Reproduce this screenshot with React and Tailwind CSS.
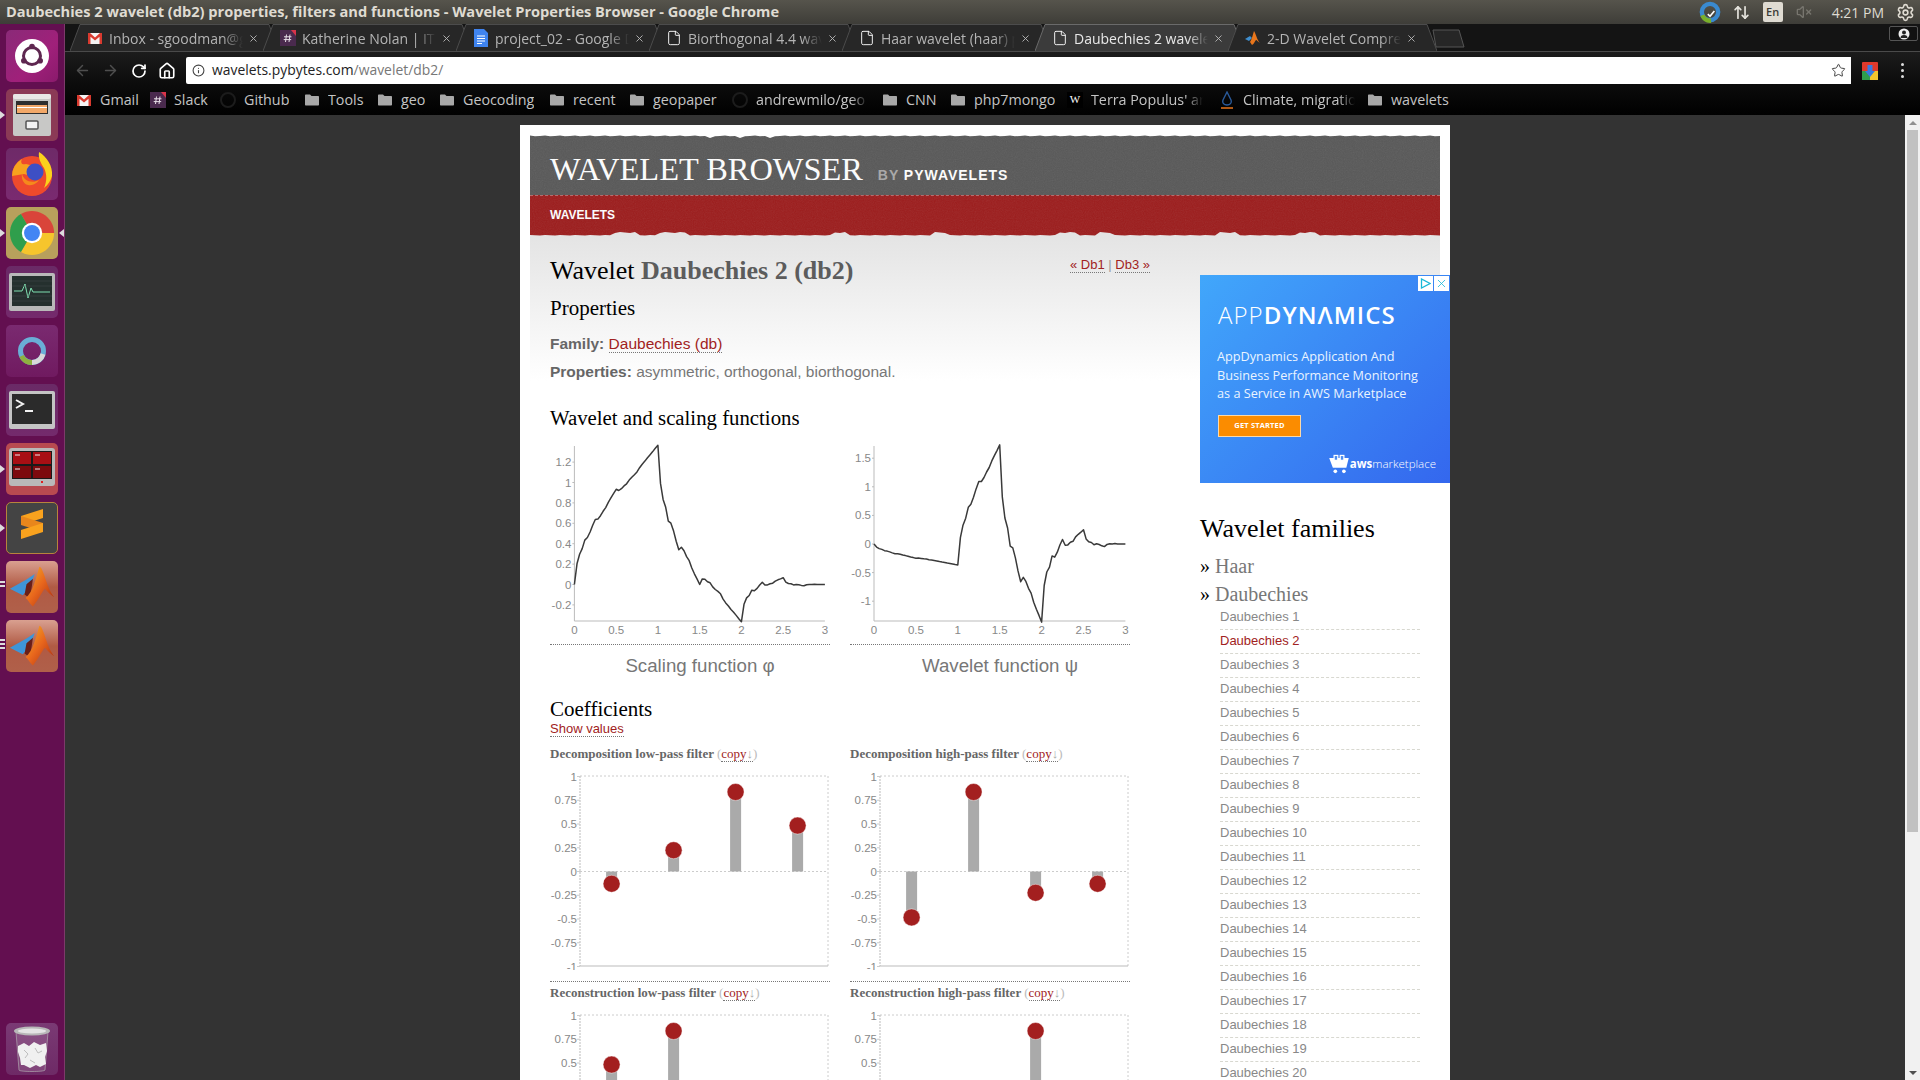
import { ArrowLeft, ArrowRight, RotateCw, Home, Info, Star, X, File, ArrowUpDown, VolumeX, Settings } from "lucide-react";

const SERIF = "font-['Liberation_Serif',serif]";
const SANS = "font-['Liberation_Sans',sans-serif]";
const UI = "font-['Open_Sans',sans-serif]";

// db2 scaling + wavelet functions, worked out from the filter by the cascade
const H = [0.6830127, 1.1830127, 0.3169873, -0.1830127];
const G = [-0.1830127, -0.3169873, 1.1830127, -0.6830127];
const N = 32;
const phi = new Array(3 * N + 1).fill(0);
phi[N] = 1.3660254;
phi[2 * N] = -0.3660254;
const at = (i) => (i < 0 || i > 3 * N ? 0 : phi[i]);
for (let s = N / 2; s >= 1; s /= 2) {
  for (let i = s; i < 3 * N; i += 2 * s) {
    phi[i] = H.reduce((acc, h, k) => acc + h * at(2 * i - k * N), 0);
  }
}
const psi = phi.map((_, i) => G.reduce((acc, g, k) => acc + g * at(2 * i - k * N), 0));

const TABS = [
  { title: "Inbox - sgoodman@gmail.com", icon: "gmail" },
  { title: "Katherine Nolan | IT Services", icon: "slack" },
  { title: "project_02 - Google Docs", icon: "docs" },
  { title: "Biorthogonal 4.4 wavelet", icon: "file" },
  { title: "Haar wavelet (haar) properties", icon: "file" },
  { title: "Daubechies 2 wavelet (db2)", icon: "file", active: true },
  { title: "2-D Wavelet Compression", icon: "matlab" },
];

const BOOKMARKS = [
  { label: "Gmail", icon: "gmail", w: "w-[74px]" },
  { label: "Slack", icon: "slack", w: "w-[70px]" },
  { label: "Github", icon: "github", w: "w-[84px]" },
  { label: "Tools", icon: "folder", w: "w-[73px]" },
  { label: "geo", icon: "folder", w: "w-[62px]" },
  { label: "Geocoding", icon: "folder", w: "w-[110px]" },
  { label: "recent", icon: "folder", w: "w-[80px]" },
  { label: "geopaper", icon: "folder", w: "w-[103px]" },
  { label: "andrewmilo/geo", icon: "github", w: "w-[150px]", fade: true },
  { label: "CNN", icon: "folder", w: "w-[68px]" },
  { label: "php7mongo", icon: "folder", w: "w-[117px]" },
  { label: "Terra Populus' area", icon: "wiki", w: "w-[152px]", fade: true },
  { label: "Climate, migration", icon: "climate", w: "w-[148px]", fade: true },
  { label: "wavelets", icon: "folder", w: "w-[100px]" },
];

const Favicon = ({ kind }) => {
  if (kind === "gmail")
    return (
      <svg width="16" height="16" viewBox="0 0 16 16">
        <rect x="1" y="3" width="14" height="11" fill="#f4f4f4" />
        <path d="M1 3h2l5 4.5L13 3h2v11h-2.500V6.800L8 10.500 3.500 6.800V14H1z" fill="#d93a2f" />
      </svg>
    );
  if (kind === "slack")
    return (
      <svg width="16" height="16" viewBox="0 0 16 16">
        <rect width="16" height="16" fill="#4a2a4e" />
        <path d="M11 0h5v6z" fill="#d8344a" />
        <path d="M6.500 4.500 5.500 12M10 4.500 9 12M4 6.800h7.500M3.700 9.600h7.500" stroke="#e8e0e8" strokeWidth="1" />
      </svg>
    );
  if (kind === "docs")
    return (
      <svg width="16" height="18" viewBox="0 0 16 18">
        <path d="M1 0h10l4 4v14H1z" fill="#3f84f0" />
        <path d="M4 7h8M4 9.500h8M4 12h8M4 14.500h5" stroke="#fff" strokeWidth="1" />
      </svg>
    );
  if (kind === "file") return <File size={16} strokeWidth={1.4} className="text-white" />;
  if (kind === "matlab")
    return (
      <svg width="16" height="16" viewBox="0 0 16 16">
        <path d="M0 9l5-3 2 2-3 3z" fill="#3f8fd0" />
        <path d="M9 1c2 3 3 9 6 12-2-1-3-3-4-3-1 1-2 4-4 5L5 12C7 9 8 4 9 1z" fill="#e8761c" />
      </svg>
    );
  if (kind === "github")
    return (
      <svg width="16" height="16" viewBox="0 0 16 16">
        <circle cx="8" cy="8" r="7" fill="none" stroke="#1c1c1c" strokeWidth="2" />
      </svg>
    );
  if (kind === "folder")
    return (
      <svg width="14" height="14" viewBox="0 0 14 14">
        <path d="M0 2.500c0-.6.400-1 1-1h4l1.500 1.500H13c.6 0 1 .400 1 1v7.500c0 .6-.400 1-1 1H1c-.6 0-1-.400-1-1z" fill="#a8a8a8" />
      </svg>
    );
  if (kind === "wiki")
    return (
      <span className={`flex h-[16px] w-[16px] items-center justify-center bg-black text-[11px] text-white ${SERIF}`}>W</span>
    );
  return (
    <svg width="14" height="18" viewBox="0 0 14 18">
      <path d="M7 1 3 9c-1 3 1 5 4 5s5-2 4-5z" fill="none" stroke="#2a5a9a" strokeWidth="1.400" />
      <path d="M1 17h12" stroke="#e8761c" strokeWidth="1.500" />
    </svg>
  );
};

const Tab = ({ tab }) => (
  <div className="relative h-[28px] w-[193px] shrink-0">
    <svg width="209" height="28" viewBox="0 0 209 28" className="absolute left-0 top-0">
      <path d="M0 28 10 1.500h189L209 28" fill={tab.active ? "#3b3b3b" : "#272727"} stroke={tab.active ? "#6a6a6a" : "#4c4c4c"} />
    </svg>
    <div className="relative flex h-full items-center pl-[17px] pt-[2px]">
      <span className="flex w-[16px] justify-center"><Favicon kind={tab.icon} /></span>
      <span className={`ml-[6px] w-[134px] overflow-hidden whitespace-nowrap text-[14px] [mask-image:linear-gradient(90deg,#000_85%,transparent)] ${UI} ${tab.active ? "text-[#e8e8e8]" : "text-[#b4b4b4]"}`}>
        {tab.title}
      </span>
      <X size={11} strokeWidth={2} className="ml-[5px] text-[#b8b8b8]" />
    </div>
  </div>
);

const Tile = ({ bg, children }) => (
  <div className={`relative flex h-[52px] w-[52px] items-center justify-center overflow-hidden rounded-[5px] ${bg}`}>{children}</div>
);

const Matlab = () => (
  <svg width="48" height="48" viewBox="0 0 52 52">
    <defs>
      <linearGradient id="mw" x1="0" x2="1" y1="0" y2="1">
        <stop offset="0" stopColor="#f2b52a" />
        <stop offset=".5" stopColor="#e8661c" />
        <stop offset="1" stopColor="#a62a10" />
      </linearGradient>
    </defs>
    <path d="M2 28 20 18l9-6-5 14-8 9z" fill="#3f95d8" />
    <path d="M20 23l7-6-2 14 2 10-9-7z" fill="#6a1f18" />
    <path d="M34 4c3 0 6 12 9 20 2 6 5 10 7 13-4-2-7-6-10-9-4 4-8 14-13 19-3-2-5-7-8-9 8-6 12-24 15-34z" fill="url(#mw)" />
  </svg>
);

const Launcher = () => (
  <div className="relative flex w-[65px] shrink-0 flex-col border-r border-r-[#7d3a6a] bg-[#630f50] pb-[5px] pl-[6px] pt-[6px]">
    <div className="flex flex-col gap-[7px]">
      <Tile bg="bg-[linear-gradient(135deg,#8a2a78,#a0207a_60%,#8a1a6c)]">
        <svg width="34" height="34" viewBox="0 0 34 34">
          <circle cx="17" cy="17" r="17" fill="#fff" />
          <circle cx="17" cy="17" r="8.500" fill="none" stroke="#5e2750" strokeWidth="3" />
          <circle cx="17" cy="7.500" r="2.800" fill="#5e2750" />
          <circle cx="8.800" cy="21.700" r="2.800" fill="#5e2750" />
          <circle cx="25.200" cy="21.700" r="2.800" fill="#5e2750" />
        </svg>
      </Tile>
      <div className="relative">
        <Tile bg="bg-[#8b3a56]">
          <svg width="40" height="44" viewBox="0 0 40 44">
            <rect x="1" y="1" width="38" height="42" rx="2" fill="#c8c8c6" />
            <rect x="1" y="1" width="38" height="5" rx="2" fill="#e8e8e6" />
            <rect x="4" y="8" width="32" height="13" fill="#2e2e2e" />
            <rect x="5" y="12" width="30" height="8" fill="#f2a868" />
            <rect x="5" y="14" width="30" height="1" fill="#fff" />
            <rect x="14" y="28" width="12" height="8" rx="1" fill="#f2f2f2" stroke="#555" strokeWidth="1.500" />
          </svg>
        </Tile>
        <span className="absolute left-[-6px] top-[22px] h-0 w-0 border-y-[4px] border-l-[5px] border-y-transparent border-l-[#ddd]" />
      </div>
      <Tile bg="bg-[linear-gradient(#6e2a68,#7a2a70)]">
        <svg width="46" height="46" viewBox="0 0 46 46">
          <circle cx="23" cy="25" r="20" fill="#ee4a2c" />
          <path d="M3 25a20 20 0 0 1 10-17c-2 4 0 6 4 5l8 2 3 6-6 4-7-2z" fill="#f7a21e" />
          <circle cx="26" cy="21" r="8.500" fill="#3d4fc4" />
          <path d="M13 22c1 8 10 11 17 7-2 3-6 6-11 5-5-1-7-7-6-12z" fill="#f58a1c" />
          <path d="M30 1c8 5 14 14 13 24-1 4-4 9-8 12 3-7 3-14 0-20-3-5-6-9-5-16z" fill="#fbd11c" />
        </svg>
      </Tile>
      <div className="relative">
        <Tile bg="bg-[#b8a05c]">
          <svg width="46" height="46" viewBox="0 0 52 52">
            <path d="M26 26 13.500 4.400A25 25 0 0 1 51 26z" fill="#d9443a" />
            <path d="M26 26h25A25 25 0 0 1 13.500 47.600z" fill="#f6c52c" />
            <path d="M26 26 13.500 47.600A25 25 0 0 1 13.500 4.400z" fill="#2f9e4c" />
            <circle cx="26" cy="26" r="11.500" fill="#fff" />
            <circle cx="26" cy="26" r="9" fill="#4285f4" />
          </svg>
        </Tile>
        <span className="absolute left-[-6px] top-[22px] h-0 w-0 border-y-[4px] border-l-[5px] border-y-transparent border-l-[#ddd]" />
        <span className="absolute left-[53px] top-[22px] h-0 w-0 border-y-[4px] border-r-[5px] border-y-transparent border-r-[#ddd]" />
      </div>
      <Tile bg="bg-[linear-gradient(#6a2a66,#742a6c)]">
        <svg width="46" height="38" viewBox="0 0 46 38">
          <rect x="0" y="0" width="46" height="38" rx="2" fill="#b9b9b9" />
          <rect x="3" y="3" width="40" height="30" fill="#25302e" />
          <path d="M5 18h8l3-7 3 14 3-10 2 4h17" fill="none" stroke="#7fe0b0" strokeWidth="1" />
          <path d="M3 8h40M3 13h40M3 23h40M3 28h40" stroke="#3c4846" strokeWidth=".6" />
        </svg>
      </Tile>
      <Tile bg="bg-[linear-gradient(#7a2a70,#701a60)]">
        <svg width="30" height="30" viewBox="0 0 30 30">
          <circle cx="15" cy="15" r="11.500" fill="none" stroke="#6aaed6" strokeWidth="5" />
          <path d="M4.500 20A11.500 11.500 0 0 0 15 26.500" fill="none" stroke="#8fb040" strokeWidth="5" />
          <path d="M15 26.500A11.500 11.500 0 0 0 26 18" fill="none" stroke="#d8d8d8" strokeWidth="5" />
        </svg>
      </Tile>
      <Tile bg="bg-[linear-gradient(#6a2a66,#742a6c)]">
        <svg width="46" height="38" viewBox="0 0 46 38">
          <rect width="46" height="38" rx="2" fill="#c4c4c4" />
          <rect x="3" y="3" width="40" height="30" fill="#2b2b2b" />
          <path d="M7 9l7 4-7 4" fill="none" stroke="#f2f2f2" strokeWidth="2" />
          <path d="M16 20h8" stroke="#f2f2f2" strokeWidth="2" />
        </svg>
      </Tile>
      <div className="relative">
        <Tile bg="bg-[#b84a50]">
          <svg width="46" height="42" viewBox="0 0 46 42">
            <rect width="46" height="38" rx="3" fill="#b9b9b9" />
            <rect x="3" y="3" width="40" height="28" fill="#1a1a1a" />
            <rect x="4" y="4" width="18" height="12" fill="#a80f14" />
            <rect x="24" y="4" width="18" height="12" fill="#a80f14" />
            <rect x="4" y="18" width="18" height="12" fill="#7c0a0e" />
            <rect x="24" y="18" width="18" height="12" fill="#7c0a0e" />
            <path d="M6 7h5M26 7h5M6 21h5M26 21h5" stroke="#eee" strokeWidth="1" />
            <rect x="32" y="33" width="2" height="2" fill="#e02020" />
          </svg>
        </Tile>
        <span className="absolute left-[-6px] top-[22px] h-0 w-0 border-y-[4px] border-l-[5px] border-y-transparent border-l-[#ddd]" />
      </div>
      <div className="relative">
        <Tile bg="bg-[#444] border border-[#b8843c]">
          <svg width="30" height="40" viewBox="0 0 30 40">
            <path d="M26 1v9L4 17V8z" fill="#f9a21e" />
            <path d="M4 8l22 7v9L4 17z" fill="#e8861c" />
            <path d="M26 15v9L4 31v-9z" fill="#f9a21e" />
          </svg>
        </Tile>
        <span className="absolute left-[-6px] top-[22px] h-0 w-0 border-y-[4px] border-l-[5px] border-y-transparent border-l-[#ddd]" />
      </div>
      <div className="relative">
        <Tile bg="bg-[linear-gradient(#d9a090,#b05a44_50%,#b0604a)]"><Matlab /></Tile>
        <span className="absolute left-[-6px] top-[20px] h-[2px] w-[5px] bg-[#ddd]" />
        <span className="absolute left-[-6px] top-[24px] h-[2px] w-[5px] bg-[#ddd]" />
      </div>
      <div className="relative">
        <Tile bg="bg-[linear-gradient(#d9a090,#b05a44_50%,#b0604a)]"><Matlab /></Tile>
        <span className="absolute left-[-6px] top-[19px] h-[2px] w-[5px] bg-[#ddd]" />
        <span className="absolute left-[-6px] top-[23px] h-[2px] w-[5px] bg-[#ddd]" />
        <span className="absolute left-[-6px] top-[27px] h-[2px] w-[5px] bg-[#ddd]" />
      </div>
    </div>
    <div className="mt-auto">
      <Tile bg="bg-[linear-gradient(#7a3a74,#6e2a66)]">
        <svg width="40" height="50" viewBox="0 0 40 50">
          <path d="M4 8l3 38c0 2 26 2 26 0l3-38z" fill="#ffffff20" stroke="#b8b8b8" strokeWidth=".6" />
          <ellipse cx="20" cy="7" rx="18" ry="4.500" fill="#b8b8b8" />
          <ellipse cx="20" cy="7" rx="14" ry="2.500" fill="#e4e4e4" />
          <path d="M6 22l6-3 5 3 5-4 6 3 6-2 1 8-2 6 1 7-6 3-4-2-6 3-6-3-3 0-1-7-2-6z" fill="#f0f0f0" />
          <path d="M12 26l4 4-3 4M23 24l3 5 4-2M18 36l5 3" fill="none" stroke="#bdbdbd" strokeWidth="1" />
        </svg>
      </Tile>
    </div>
  </div>
);

const Tray = () => (
  <div className="flex h-full items-center">
    <svg width="22" height="24" viewBox="0 0 20 22" className="mr-[12px]">
      <circle cx="10" cy="11" r="7.500" fill="none" stroke="#3a8ad0" strokeWidth="4" />
      <path d="M3 14a8 8 0 0 0 8 5" fill="none" stroke="#7ab02a" strokeWidth="4" />
      <path d="M8 13l2 2 4-5" stroke="#fff" fill="none" strokeWidth="1.500" />
    </svg>
    <ArrowUpDown size={17} strokeWidth={2.4} className="mr-[13px] text-[#e4e2dc]" />
    <span className={`mr-[13px] flex h-[20px] w-[20px] items-center justify-center rounded-[2px] bg-[#dfdbd2] text-[11px] font-semibold text-[#3c3b37] ${UI}`}>En</span>
    <VolumeX size={16} className="mr-[20px] text-[#77756e]" />
    <span className={`mr-[12px] text-[14px] text-[#dfdbd2] ${UI}`}>4:21 PM</span>
    <Settings size={19} className="mr-[5px] text-[#dfdbd2]" />
  </div>
);

const TitleBar = () => (
  <div className="flex h-[24px] shrink-0 items-center justify-between bg-[linear-gradient(#56544c,#3e3d38)] pl-[6px]">
    <span className={`whitespace-nowrap text-[14.600px] font-bold text-[#dfdbd2] ${UI}`}>
      Daubechies 2 wavelet (db2) properties, filters and functions - Wavelet Properties Browser - Google Chrome
    </span>
    <Tray />
  </div>
);

const TabStrip = () => (
  <div className="flex h-[28px] shrink-0 items-end justify-between border-b border-b-[#4a4a4a] bg-[#141414] pl-[5px]">
    <div className="flex items-end">
      {TABS.map((t) => <Tab key={t.title} tab={t} />)}
      <svg width="34" height="20" viewBox="0 0 34 20" className="mb-[2px] ml-[11px]">
        <path d="M1 1h26l5 17H4z" fill="#262626" stroke="#555" />
      </svg>
    </div>
    <div className="mb-[10px] mr-[2px] flex h-[15px] w-[29px] items-center justify-center rounded-[2px] border border-[#555] bg-[#111]">
      <svg width="12" height="12" viewBox="0 0 12 12"><circle cx="6" cy="6" r="5.500" fill="#eee" /><circle cx="6" cy="4.500" r="2" fill="#222" /><path d="M2.500 10a3.500 3 0 0 1 7 0z" fill="#222" /></svg>
    </div>
  </div>
);

const Toolbar = () => (
  <div className="flex h-[32px] shrink-0 items-end bg-[linear-gradient(#1c1c1c,#0c0c0c)]">
    <div className="flex h-[27px] w-[121px] items-center pl-[9px] text-[#777]">
      <ArrowLeft size={17} strokeWidth={2} className="opacity-60" />
      <ArrowRight size={17} strokeWidth={2} className="ml-[11px] opacity-60" />
      <RotateCw size={16} strokeWidth={2.6} className="ml-[12px] text-white" />
      <Home size={18} strokeWidth={2.2} className="ml-[11px] text-white" />
    </div>
    <div className="flex h-[27px] w-[1665px] items-center rounded-l-[2px] bg-white pl-[6px] pr-[5px]">
      <Info size={13} className="text-[#444]" />
      <span className={`ml-[7px] text-[13.900px] ${UI} text-[#222]`}>
        wavelets.pybytes.com<span className="text-[#777]">/wavelet/db2/</span>
      </span>
      <Star size={15} strokeWidth={1.6} className="ml-auto text-[#444]" />
    </div>
    <div className="flex h-[27px] flex-1 items-center pl-[11px]">
      <svg width="16" height="18" viewBox="0 0 16 18">
        <rect width="16" height="18" rx="1" fill="#e0392c" />
        <rect y="9" width="8" height="9" fill="#2f9e4c" />
        <rect x="8" y="9" width="8" height="9" fill="#f6c52c" />
        <path d="M5.500 3h5v6H13l-5 6-5-6h2.500z" fill="#3a7ae0" />
      </svg>
      <span className="ml-[23px] flex flex-col gap-[3px]">
        <i className="block h-[3px] w-[3px] rounded-full bg-[#ddd]" />
        <i className="block h-[3px] w-[3px] rounded-full bg-[#ddd]" />
        <i className="block h-[3px] w-[3px] rounded-full bg-[#ddd]" />
      </span>
    </div>
  </div>
);

const BookmarkBar = () => (
  <div className="flex h-[31px] shrink-0 items-center bg-[linear-gradient(#0c0c0c,#000)] pl-[11px]">
    {BOOKMARKS.map((b) => (
      <div key={b.label} className={`flex items-center ${b.w}`}>
        <span className="flex w-[16px] shrink-0 justify-center"><Favicon kind={b.icon} /></span>
        <span className={`ml-[8px] overflow-hidden whitespace-nowrap text-[14.300px] text-[#c4c4c4] ${UI} ${b.fade ? "w-[112px] [mask-image:linear-gradient(90deg,#000_85%,transparent)]" : ""}`}>
          {b.label}
        </span>
      </div>
    ))}
  </div>
);

// torn paper edge, a rough line with a few bigger bites
const tornTop = (() => {
  let p = "M0 0";
  for (let x = 0; x <= 910; x += 5) {
    const big = x > 150 && x < 250 && x % 30 === 0 ? 2.5 : 0;
    p += `L${x} ${0.5 + ((x * 7) % 3) * 0.4 + big}`;
  }
  return p + "L910 0Z";
})();
const tornBottom = (() => {
  let p = "M0 8";
  for (let x = 0; x <= 910; x += 5) {
    const bump = [[85, 105], [130, 155], [305, 318], [405, 418], [530, 548], [570, 582], [690, 705], [770, 785]].some(([a, b]) => x >= a && x <= b);
    p += `L${x} ${bump ? 4 + (x % 15) / 10 : 7 + ((x * 5) % 3) * 0.3}`;
  }
  return p + "L910 8Z";
})();

const SiteHeader = () => (
  <div className="relative">
    <div className="flex h-[60px] items-end bg-[#585858] pb-[7px] pl-[20px]">
      <span className={`text-[32.400px] leading-[38px] text-white ${SERIF}`}>WAVELET BROWSER</span>
      <span className={`mb-[2px] ml-[15px] text-[14px] font-bold tracking-[0.07em] text-[#a8a8a8] ${SANS}`}>
        BY <span className="text-white">PYWAVELETS</span>
      </span>
    </div>
    <div className="flex h-[41px] items-center border-t border-dashed border-t-[#b56a6a] bg-[#9c1c1c] pb-[3px] pl-[20px]">
      <span className={`text-[12px] font-bold text-white ${SANS}`}>WAVELETS</span>
    </div>
    {/* paper grain + torn edges */}
    <svg width="910" height="101" className="pointer-events-none absolute left-0 top-0 opacity-[0.1]">
      <filter id="grain"><feTurbulence type="fractalNoise" baseFrequency="0.9" numOctaves="2" /><feColorMatrix type="saturate" values="0" /></filter>
      <rect width="910" height="101" filter="url(#grain)" />
    </svg>
    <svg width="910" height="8" className="absolute left-0 top-0"><path d={tornTop} fill="#fff" /></svg>
    <svg width="910" height="8" className="absolute bottom-0 left-0"><path d={tornBottom} fill="#e4e4e4" /></svg>
  </div>
);

const A = ({ children, className = "" }) => (
  <a className={`border-b border-dotted border-b-[#777] text-[#a12222] ${className}`}>{children}</a>
);

const FunctionPlot = ({ data, ox, sx, oy, sy, yTicks, caption }) => {
  const d = data.map((v, i) => `${i ? "L" : "M"}${(ox + (sx * i) / N).toFixed(1)} ${(oy - sy * v).toFixed(1)}`).join("");
  return (
    <div>
      <div className="border-b border-dotted border-b-[#777] pb-[5px]">
        <svg width="280" height="202" viewBox="0 0 280 202" className={`block ${SANS}`}>
          <path d={`M${ox} 9V184H${ox + sx * 3}`} fill="none" stroke="#bbb" />
          {yTicks.map((t) => (
            <g key={t}>
              <path d={`M${ox - 2} ${oy - sy * t}H${ox}`} stroke="#bbb" />
              <text x={ox - 3} y={oy - sy * t + 4} textAnchor="end" fontSize="11.500" fill="#888">{t}</text>
            </g>
          ))}
          {[0, 0.5, 1, 1.5, 2, 2.5, 3].map((t) => (
            <text key={t} x={ox + sx * t} y={197} textAnchor="middle" fontSize="11.500" fill="#888">{t}</text>
          ))}
          <path d={d} fill="none" stroke="#3a3a3a" strokeWidth="1.500" strokeLinejoin="round" />
        </svg>
      </div>
      <div className={`mt-[10px] pl-[20px] text-center text-[18.700px] leading-[22px] text-[#777] ${SANS}`}>{caption}</div>
    </div>
  );
};

const Y_TICKS = [1, 0.75, 0.5, 0.25, 0, -0.25, -0.5, -0.75, -1];
const CENTERS = [61.6, 123.6, 185.6, 247.6];

const StemPlot = ({ values }) => (
  <svg width="280" height="200" viewBox="0 0 280 200" className={`block ${SANS}`}>
    <path d="M30 6H278V196" fill="none" stroke="#ccc" strokeDasharray="2 2" />
    <path d="M30 6V196" fill="none" stroke="#bbb" strokeDasharray="2 1" />
    <path d="M30 196H278" stroke="#bbb" />
    <path d="M30 101.500H278" stroke="#ccc" strokeDasharray="2 2" />
    {Y_TICKS.map((t) => (
      <g key={t}>
        <path d={`M27 ${101.5 - 95 * t}H30`} stroke="#ccc" />
        <text x="27" y={101.5 - 95 * t + 4} textAnchor="end" fontSize="11.500" fill="#888">{t}</text>
      </g>
    ))}
    {values.map((v, i) => (
      <g key={i}>
        <rect x={CENTERS[i] - 5.5} y={Math.min(101.5, 101.5 - 95 * v)} width="11" height={Math.abs(95 * v)} fill="#aaa" />
        <circle cx={CENTERS[i]} cy={101.5 - 95 * v} r="8.500" fill="#a31f1f" stroke="#fff" strokeOpacity=".7" strokeWidth=".6" />
      </g>
    ))}
  </svg>
);

const FilterCell = ({ title, values, underline }) => (
  <div className={underline ? "border-b border-dotted border-b-[#777] pb-[11px]" : ""}>
    <div className={`h-[27px] whitespace-nowrap text-[13px] font-bold leading-[22px] text-[#666] ${SERIF}`}>
      {title}{" "}
      <span className="font-normal text-[#bbb]">
        (<A>copy<span className="text-[#aaa]">↓</span></A>)
      </span>
    </div>
    <StemPlot values={values} />
  </div>
);

const Main = () => (
  <div className="w-[650px] shrink-0 pr-[50px]">
    <div className="flex items-start justify-between pt-[20px]">
      <h1 className={`text-[26px] leading-[30px] text-black ${SERIF}`}>
        Wavelet <span className="font-bold text-[#5c5c5c]">Daubechies 2 (db2)</span>
      </h1>
      <div className={`pt-[1px] text-[13px] leading-[15px] text-[#999] ${SANS}`}>
        <A>« Db1</A> | <A>Db3 »</A>
      </div>
    </div>
    <h2 className={`mt-[10px] text-[21px] leading-[24px] text-black ${SERIF}`}>Properties</h2>
    <p className={`mt-[12px] text-[15.500px] leading-[24px] text-[#777] ${SANS}`}>
      <b className="text-[#666]">Family:</b> <A>Daubechies (db)</A>
    </p>
    <p className={`mt-[4px] text-[15.500px] leading-[24px] text-[#777] ${SANS}`}>
      <b className="text-[#666]">Properties:</b> asymmetric, orthogonal, biorthogonal.
    </p>
    <h2 className={`mt-[22px] text-[20.800px] leading-[24px] text-black ${SERIF}`}>Wavelet and scaling functions</h2>
    <div className="mt-[7px] grid w-[580px] grid-cols-2 gap-x-[20px]">
      <FunctionPlot data={phi} ox={24.4} sx={83.5} oy={147.5} sy={102} yTicks={[1.2, 1, 0.8, 0.6, 0.4, 0.2, 0, -0.2]} caption="Scaling function φ" />
      <FunctionPlot data={psi} ox={24} sx={83.8} oy={107} sy={57.2} yTicks={[1.5, 1, 0.5, 0, -0.5, -1]} caption="Wavelet function ψ" />
    </div>
    <h2 className={`mt-[20px] text-[21px] leading-[24px] text-black ${SERIF}`}>Coefficients</h2>
    <div className={`text-[13px] leading-[16px] ${SANS}`}><A>Show values</A></div>
    <div className="mt-[6px] grid w-[580px] grid-cols-2 gap-x-[20px]">
      <FilterCell underline title="Decomposition low-pass filter" values={[-0.129, 0.224, 0.837, 0.483]} />
      <FilterCell underline title="Decomposition high-pass filter" values={[-0.483, 0.837, -0.224, -0.129]} />
      <FilterCell title="Reconstruction low-pass filter" values={[0.483, 0.837, 0.224, -0.129]} />
      <FilterCell title="Reconstruction high-pass filter" values={[-0.129, -0.224, 0.837, -0.483]} />
    </div>
  </div>
);

const Ad = () => (
  <div className={`relative h-[208px] w-[250px] bg-[linear-gradient(135deg,#41a7fb,#3467ee)] pl-[17px] text-white ${UI}`}>
    <div className="absolute right-[1px] top-[1px] flex gap-[1px]">
      <span className="flex h-[15px] w-[15px] items-center justify-center bg-white">
        <svg width="11" height="11" viewBox="0 0 11 11"><path d="M1.500 1v9L10 5.500z" fill="none" stroke="#19b8d8" strokeWidth="1.300" /></svg>
      </span>
      <span className="flex h-[15px] w-[15px] items-center justify-center bg-white">
        <X size={13} strokeWidth={1.5} className="text-[#19b8d8]" />
      </span>
    </div>
    <div className="whitespace-nowrap pl-[1px] pt-[25px] text-[24px] leading-[30px] tracking-[0.045em]">
      <span className="font-light">APP</span><span className="font-semibold">DYNΛMICS</span>
    </div>
    <div className="mt-[17px] whitespace-nowrap text-[12.700px] leading-[18.500px] text-[#eaf4ff]">
      AppDynamics Application And<br />Business Performance Monitoring<br />as a Service in AWS Marketplace
    </div>
    <div className="ml-[1px] mt-[12px] flex h-[22px] w-[83px] items-center justify-center border border-[#fbd9a8] bg-[#fb8c00] text-[7.500px] font-bold tracking-[0.02em]">
      GET STARTED
    </div>
    <div className="mt-[17px] flex items-center justify-end pr-[14px]">
      <svg width="22" height="20" viewBox="0 0 18 16">
        <path d="M1 3h16l-2 8H4z" fill="#fff" />
        <rect x="5" y="1" width="3" height="4" fill="#4b8df0" stroke="#fff" />
        <rect x="10" y="1" width="3" height="4" fill="#4b8df0" stroke="#fff" />
        <circle cx="6" cy="14" r="1.500" fill="#fff" /><circle cx="13" cy="14" r="1.500" fill="#fff" />
      </svg>
      <span className="text-[11.500px] font-bold leading-[14px]">aws</span>
      <span className="text-[11.500px] font-light leading-[14px]">marketplace</span>
    </div>
  </div>
);

const Sidebar = () => (
  <div className="mr-[-10px] w-[250px] shrink-0 pt-[39px]">
    <Ad />
    <h2 className={`mt-[30px] text-[26px] leading-[32px] text-black ${SERIF}`}>Wavelet families</h2>
    <div className={`mt-[7px] text-[20px] leading-[28px] text-black ${SERIF}`}>» <span className="text-[#777]">Haar</span></div>
    <div className={`text-[20px] leading-[28px] text-black ${SERIF}`}>» <span className="text-[#777]">Daubechies</span></div>
    <ul className={`ml-[20px] mt-[-2px] w-[200px] text-[13px] ${SANS}`}>
      {Array.from({ length: 20 }, (_, i) => i + 1).map((n) => (
        <li key={n} className={`h-[24px] border-b border-dashed border-b-[#d8d8d0] leading-[21px] ${n === 2 ? "text-[#a12222]" : "text-[#888]"}`}>
          Daubechies {n}
        </li>
      ))}
    </ul>
  </div>
);

const Scrollbar = () => (
  <div className="flex w-[15px] shrink-0 flex-col items-center bg-[#f1f1f1]">
    <span className="mt-[6px] h-0 w-0 border-x-[4px] border-b-[4px] border-x-transparent border-b-[#909090]" />
    <div className="mt-[5px] h-[702px] w-[11px] bg-[#c1c1c1]" />
    <span className="mb-[5px] mt-auto h-0 w-0 border-x-[4px] border-t-[4px] border-x-transparent border-t-[#505050]" />
  </div>
);

export default function App() {
  return (
    <div className="flex h-[1080px] w-[1920px] flex-col overflow-hidden">
      <TitleBar />
      <div className="flex min-h-0 flex-1">
        <Launcher />
        <div className="flex min-w-0 flex-1 flex-col">
          <TabStrip />
          <Toolbar />
          <BookmarkBar />
          <div className="flex min-h-0 flex-1 bg-[#333]">
            <div className="min-w-0 flex-1 overflow-hidden">
              <div className="ml-[455px] mt-[10px] w-[930px] bg-white px-[10px] pt-[10px]">
                <SiteHeader />
                <div className="flex bg-[linear-gradient(#e4e4e4,#fff_145px)] pl-[20px]">
                  <Main />
                  <Sidebar />
                </div>
              </div>
            </div>
            <Scrollbar />
          </div>
        </div>
      </div>
    </div>
  );
}
